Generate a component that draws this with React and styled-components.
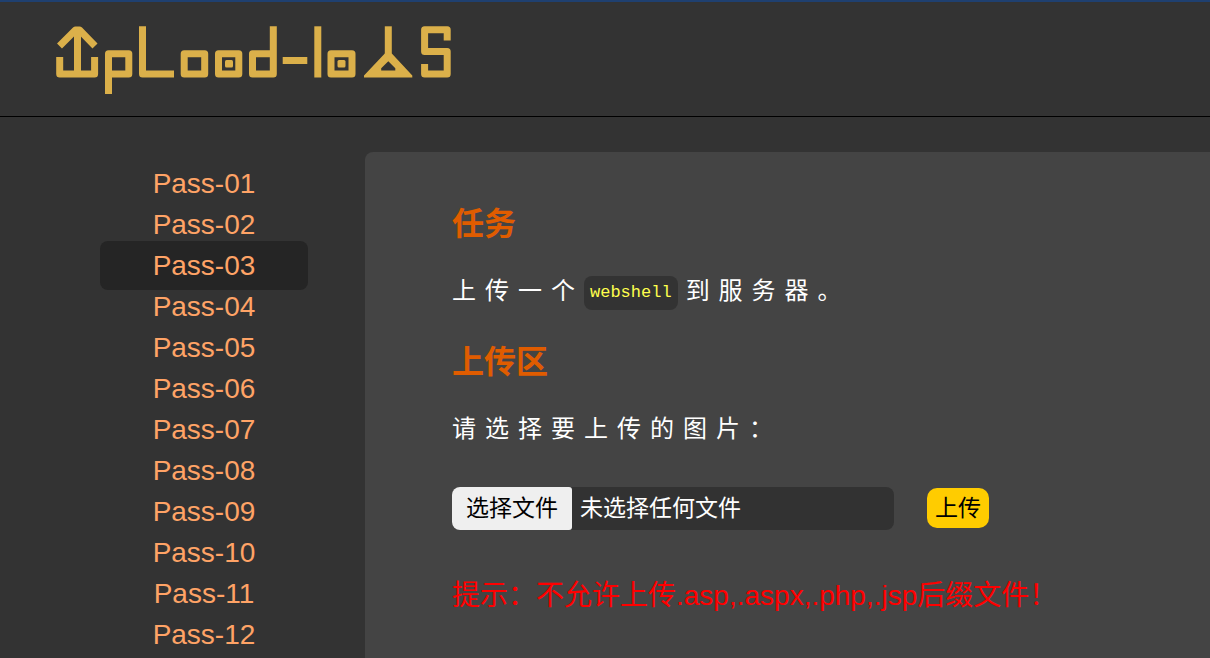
import React, { useState } from "react";
import styled, { createGlobalStyle } from "styled-components";

const GlobalStyle = createGlobalStyle`
    * {
        box-sizing: border-box;
    }
    body {
        margin: 0;
        background-color: #333333;
        color: #ffffff;
        font-family: "Liberation Sans", "Noto Sans CJK SC", sans-serif;
    }
`;

const Page = styled.div`
    display: flex;
    flex-direction: column;
    min-height: 100vh;
`;

const Header = styled.header`
    padding: 18px 50px 16px;
    border-top: 2px solid #1f4070;
    border-bottom: 1px solid #000000;
`;

const LogoLink = styled.a`
    display: block;
    width: 410px;
    height: 80px;
`;

const Content = styled.div`
    display: flex;
    flex: 1;
    padding-top: 35px;
`;

const Menu = styled.nav`
    flex: none;
    width: 365px;
    padding: 11px 57px 0 100px;
`;

const MenuList = styled.ul`
    list-style: none;
    padding: 0;
    margin: 0;
`;

const MenuItem = styled.li`
    display: flow-root;
    height: 41px;
`;

const MenuLink = styled.a`
    display: block;
    margin: -4px 0;
    padding: 4px 0;
    border-radius: 8px;
    background-color: ${(props) => (props.$active ? "#252525" : "transparent")};
    color: #ffa366;
    font-size: 28px;
    line-height: 41px;
    text-align: center;
    text-decoration: none;
`;

const Panel = styled.main`
    flex: 1;
    min-width: 0;
    padding: 49px 87px 0;
    border-top-left-radius: 8px;
    background-color: #444444;
`;

const Title = styled.h3`
    margin: 0;
    color: #e05c00;
    font-size: 32px;
    line-height: 46px;
`;

const Text = styled.p`
    margin: 27px 0 29px;
    font-size: 24px;
    line-height: 34px;
    letter-spacing: 9px;
`;

const Code = styled.code`
    display: inline-block;
    margin-right: 8px;
    padding: 0 6px;
    border-radius: 8px;
    background-color: #333333;
    color: #ffff4d;
    font-family: "Liberation Mono", monospace;
    font-size: 17px;
    line-height: 34px;
    letter-spacing: normal;
    vertical-align: middle;
`;

const UploadForm = styled.form`
    display: flex;
    align-items: center;
    gap: 33px;
    margin: 41px 0 43px;
`;

const FileBox = styled.label`
    position: relative;
    display: flex;
    flex: 0 1 442px;
    height: 43px;
    border-radius: 8px;
    background-color: #323232;
    font-size: 23px;
    line-height: 43px;
    white-space: nowrap;
    overflow: hidden;
`;

const FileInput = styled.input`
    position: absolute;
    inset: 0;
    width: 100%;
    opacity: 0;
    cursor: pointer;
`;

const FileButton = styled.span`
    padding: 0 14px;
    border-radius: 0 3px 3px 0;
    background-color: #efefef;
    color: #000000;
`;

const FileName = styled.span`
    padding-left: 8px;
`;

const SubmitButton = styled.button`
    height: 40px;
    padding: 0 8px;
    border: none;
    border-radius: 10px;
    background-color: #ffcc00;
    color: #000000;
    font-family: inherit;
    font-size: 23px;
    line-height: 40px;
    cursor: pointer;
`;

const Hint = styled.div`
    color: #ff0000;
    font-size: 28px;
    line-height: 46px;
`;

const Logo = () => (
    <svg width="410" height="80" viewBox="50 20 410 80" fill="none" stroke="#dbb04a" strokeWidth="7">
        <g strokeLinejoin="round">
            <path d="M59.5 46L75.5 30H79.5L95 46M77.5 30V74" />
            <path d="M59.7 57V74H94.6V57" />
            <path d="M108.5 94V53.8H128.8V74H108.5" />
            <path d="M142.5 26.3V74H174" />
            <path d="M184.2 53.8H204.7V74H184.2Z" />
            <path d="M218.5 53.8H238.8V74H218.5Z" />
            <path d="M273.3 26.3V74H252.5V53.8H273.3" />
            <path d="M282.7 60.5H307.3" />
            <path d="M317.8 26.3V77.5" />
            <path d="M331 53.8H352V74H331Z" />
            <path d="M388.3 26.3V56" />
            <path d="M447.2 40.5V29.8H424.6V51.5H447.2V74H424.6V64" />
        </g>
        <g fill="#dbb04a" stroke="none">
            <rect x="225" y="60" width="8" height="7.5" rx="1.5" />
            <rect x="337.5" y="60" width="8" height="7.5" rx="1.5" />
            <path
                fillRule="evenodd"
                d="M384.8 53.5L364 75.5V77.5H412.3V75.5L391.8 53.5ZM388.3 61.3L395.3 68.3V70.5H381.2V68.3Z"
            />
        </g>
    </svg>
);

const passes = ["01", "02", "03", "04", "05", "06", "07", "08", "09", "10", "11", "12"];

const App = () => {
    const [active, setActive] = useState("03");
    const [fileName, setFileName] = useState("");

    return (
        <Page>
            <GlobalStyle />
            <Header>
                <LogoLink href="#">
                    <Logo />
                </LogoLink>
            </Header>
            <Content>
                <Menu>
                    <MenuList>
                        {passes.map((p) => (
                            <MenuItem key={p}>
                                <MenuLink
                                    href={"#pass-" + p}
                                    $active={p === active}
                                    onClick={() => setActive(p)}
                                >
                                    Pass-{p}
                                </MenuLink>
                            </MenuItem>
                        ))}
                    </MenuList>
                </Menu>
                <Panel>
                    <Title>任务</Title>
                    <Text>
                        上传一个<Code>webshell</Code>到服务器。
                    </Text>
                    <Title>上传区</Title>
                    <Text>请选择要上传的图片：</Text>
                    <UploadForm onSubmit={(e) => e.preventDefault()}>
                        <FileBox>
                            <FileButton>选择文件</FileButton>
                            <FileName>{fileName || "未选择任何文件"}</FileName>
                            <FileInput
                                type="file"
                                onChange={(e) => setFileName(e.target.files[0]?.name || "")}
                            />
                        </FileBox>
                        <SubmitButton type="submit">上传</SubmitButton>
                    </UploadForm>
                    <Hint>提示：不允许上传.asp,.aspx,.php,.jsp后缀文件！</Hint>
                </Panel>
            </Content>
        </Page>
    );
};

export default App;
